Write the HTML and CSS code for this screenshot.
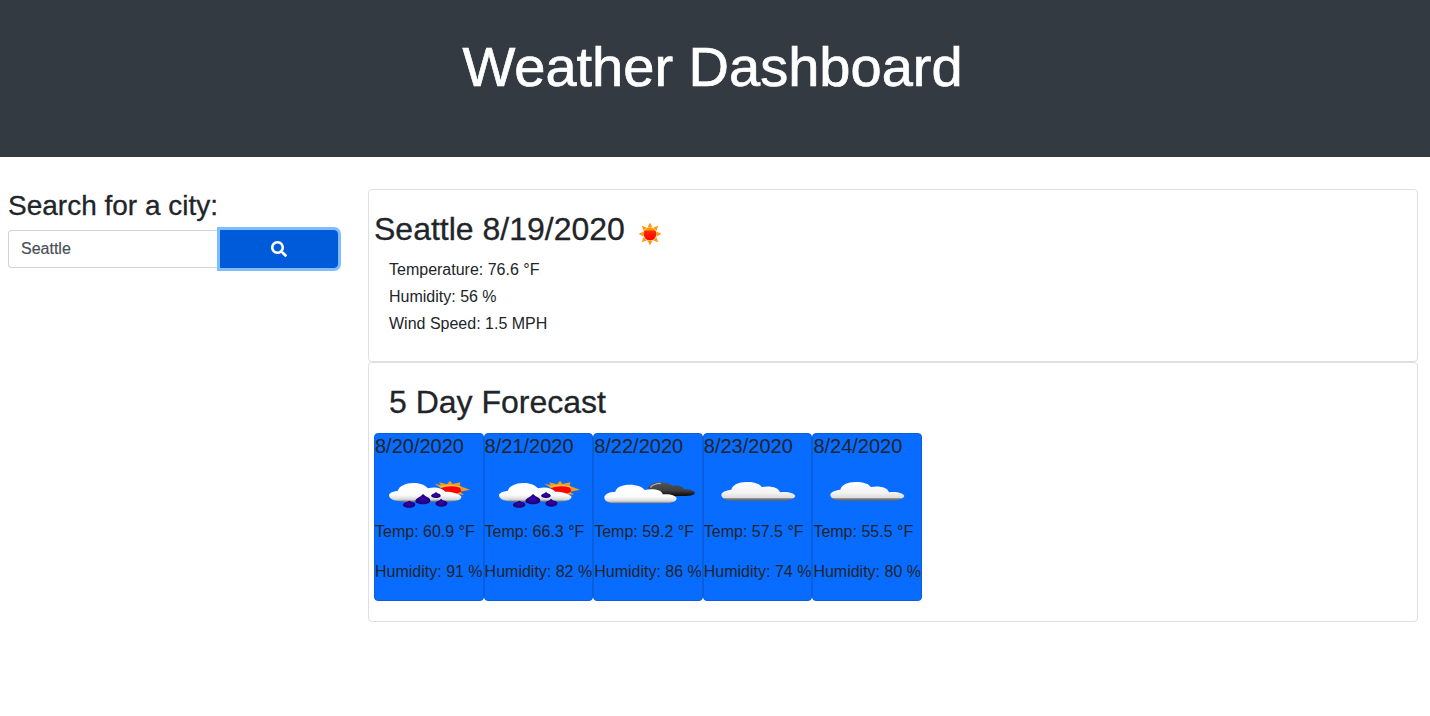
FILE: index.html
```html
<!DOCTYPE html>
<html lang="en">
<head>
<meta charset="utf-8">
<title>Weather Dashboard</title>
<link rel="stylesheet" href="styles.css">
</head>
<body>
<svg class="defs" aria-hidden="true">
  <defs>
    <linearGradient id="white" x1="0" y1="0" x2="0" y2="1">
      <stop offset="0" stop-color="#fff"/><stop offset=".65" stop-color="#fcfcfc"/><stop offset=".88" stop-color="#d8d8d8"/><stop offset="1" stop-color="#747474"/>
    </linearGradient>
    <linearGradient id="grey" x1="0" y1="0" x2="0" y2="1">
      <stop offset="0" stop-color="#fff"/><stop offset=".6" stop-color="#f2f2f2"/><stop offset=".84" stop-color="#ddd"/><stop offset=".9" stop-color="#777"/><stop offset="1" stop-color="#666"/>
    </linearGradient>
    <linearGradient id="dark" x1="0" y1="0" x2="0" y2="1">
      <stop offset="0" stop-color="#555"/><stop offset=".6" stop-color="#3f3f3f"/><stop offset="1" stop-color="#080808"/>
    </linearGradient>
    <linearGradient id="disc" x1="0" y1="0" x2="0" y2="1">
      <stop offset="0" stop-color="#ff7a00"/><stop offset=".16" stop-color="#ffa000"/><stop offset=".28" stop-color="#ff2a00"/><stop offset="1" stop-color="#f00"/>
    </linearGradient>
    <radialGradient id="drop"><stop offset="0" stop-color="#3a00b0"/><stop offset="1" stop-color="#180070"/></radialGradient>
    <g id="rays" fill="#ff9914">
      <path id="ray" d="M-2.300-7L0-11.500 2.300-7Z"/>
      <use href="#ray" transform="rotate(45)"/><use href="#ray" transform="rotate(90)"/><use href="#ray" transform="rotate(135)"/>
      <use href="#ray" transform="rotate(180)"/><use href="#ray" transform="rotate(225)"/><use href="#ray" transform="rotate(270)"/><use href="#ray" transform="rotate(315)"/>
    </g>
    <symbol id="rain" viewBox="0 0 324 162">
      <g transform="translate(17 12)">
        <path d="M161 41L180 45 175 37 199 43 208 32 216 42 239 37 237 48 268 59 239 65 250 75 227 72 200 66Z" fill="#f99b13"/>
        <path d="M176 50Q207 38 241 50L239 66 210 72Z" fill="#ffc044"/>
        <path d="M180 54Q209 44 239 53L242 65 227 71 195 68Z" fill="#f00"/>
        <path d="M25 76C25 68 38 64 52 62 55 48 77 38 101 39 119 39 134 46 142 55 165 49 185 55 194 65 214 65 235 71 242 79 244 88 231 94 207 95H66C42 95 25 87 25 76Z" fill="url(#white)"/>
        <g fill="url(#drop)">
          <path d="M86 92Q90 95 101 98C110 108 96 113 86 113 73 113 60 107 72 98Q81 95 86 92Z"/>
          <path d="M127 72Q133 79 145 84C158 98 137 103 127 103 111 103 95 96 110 85Q122 79 127 72Z"/>
          <path d="M166 66Q170 70 177 72C186 80 174 84 165 84 153 83 146 78 156 72Q162 70 166 66Z"/>
          <path d="M181 86Q185 91 196 94C207 103 194 110 183 110 169 110 158 103 169 94Q178 91 181 86Z"/>
        </g>
      </g>
    </symbol>
    <symbol id="broken" viewBox="0 0 324 162">
      <g transform="translate(-12 11)">
        <path d="M174 55C181 42 197 37 215 38 232 39 241 44 249 49 263 45 279 51 282 59 302 58 314 65 315 70 312 77 298 79 282 79H210Z" fill="url(#dark)"/>
        <path d="M181 54Q190 41 213 41" fill="none" stroke="#aaa" stroke-width="4"/>
        <path d="M43 83C44 73 57 67 76 66 80 51 98 45 119 45 142 45 158 52 164 61 187 55 217 60 218 74 243 72 259 79 260 87 257 97 242 101 220 101H78C56 101 43 95 43 83Z" fill="url(#white)"/>
      </g>
    </symbol>
    <symbol id="cloud" viewBox="0 0 324 162">
      <g transform="translate(-12 12)">
        <path d="M64 74C65 66 77 61 94 59 97 45 116 36 139 36 163 36 181 42 185 51 211 46 236 52 240 67 264 64 284 70 286 78 284 85 271 92 252 92H95C76 91 64 84 64 74Z" fill="url(#grey)"/>
      </g>
    </symbol>
  </defs>
</svg>

<header class="banner"><h1>Weather Dashboard</h1></header>

<main class="layout">
  <aside class="search">
    <h3>Search for a city:</h3>
    <form class="search-group">
      <input type="text" value="Seattle" aria-label="City">
      <button type="button" aria-label="Search">
        <svg width="16" height="16" viewBox="0 0 512 512"><path fill="currentColor" d="M505 442.700L405.300 343c-4.500-4.500-10.600-7-17-7H372c27.600-35.300 44-79.700 44-128C416 93.100 322.900 0 208 0S0 93.100 0 208s93.100 208 208 208c48.300 0 92.700-16.400 128-44v16.300c0 6.400 2.500 12.500 7 17l99.700 99.700c9.400 9.400 24.600 9.400 33.900 0l28.300-28.300c9.400-9.400 9.400-24.600.1-34zM208 336c-70.700 0-128-57.200-128-128 0-70.700 57.200-128 128-128 70.700 0 128 57.200 128 128 0 70.700-57.200 128-128 128z"/></svg>
      </button>
    </form>
  </aside>

  <div class="results">
    <section class="card current">
      <h2>Seattle 8/19/2020
        <svg class="sun" viewBox="-12 -12 24 24"><use href="#rays"/><circle r="7.100" fill="#ffbd58"/><circle r="6.300" fill="url(#disc)"/></svg>
      </h2>
      <p>Temperature: 76.6 °F</p>
      <p>Humidity: 56 %</p>
      <p>Wind Speed: 1.5 MPH</p>
    </section>
    <section class="card forecast">
      <h2>5 Day Forecast</h2>
      <div class="days">
        <article class="day"><h5>8/20/2020</h5><svg class="icon"><use href="#rain"/></svg><p>Temp: 60.9 °F</p><p>Humidity: 91 %</p></article>
        <article class="day"><h5>8/21/2020</h5><svg class="icon"><use href="#rain"/></svg><p>Temp: 66.3 °F</p><p>Humidity: 82 %</p></article>
        <article class="day"><h5>8/22/2020</h5><svg class="icon"><use href="#broken"/></svg><p>Temp: 59.2 °F</p><p>Humidity: 86 %</p></article>
        <article class="day"><h5>8/23/2020</h5><svg class="icon"><use href="#cloud"/></svg><p>Temp: 57.5 °F</p><p>Humidity: 74 %</p></article>
        <article class="day"><h5>8/24/2020</h5><svg class="icon"><use href="#cloud"/></svg><p>Temp: 55.5 °F</p><p>Humidity: 80 %</p></article>
      </div>
    </section>
  </div>
</main>
</body>
</html>
```

FILE: styles.css
```css
* { box-sizing: border-box; }
body {
  margin: 0;
  background: #fff;
  color: #212529;
  font: 16px/1.5 "Liberation Sans", Arial, sans-serif;
}
h1, h2, h3, h5, p { margin: 0; font-weight: 400; }
h1, h2, h3, h5 { line-height: 1.2; }
.defs { display: block; width: 0; height: 0; }

.banner {
  height: 157px;
  padding: 33px 5px 0 0;
  background: #343a42;
  color: #fff;
  text-align: center;
}
.banner h1 { font-size: 56px; -webkit-text-stroke: .7px #fff; }

.layout {
  display: flex;
  gap: 30px;
  padding: 32px 12px 0 8px;
}
.search { width: 330px; }
.search h3 { margin-bottom: 8px; font-size: 28px; line-height: 33px; }
.search h3, .card h2 { -webkit-text-stroke: .3px #212529; }
.search-group { display: flex; height: 38px; }
.search-group input {
  width: 212px;
  padding: 6px 12px;
  border: 1px solid #ced4da;
  border-right: 0;
  border-radius: 4px 0 0 4px;
  color: #495057;
  font: inherit;
  -webkit-text-stroke: .2px #495057;
}
.search-group button {
  display: flex;
  flex: 1;
  align-items: center;
  justify-content: center;
  padding: 0;
  border: 1px solid #005bdb;
  border-radius: 0 4px 4px 0;
  background: #005bdb;
  color: #fff;
  box-shadow: 0 0 0 3px #80bdff;
}

.results { flex: 1; }
.card { border: 1px solid #dfdfdf; border-radius: 4px; }
.card h2 { font-size: 32px; }
.current { height: 173px; padding: 20px 5px 0; }
.current h2 { display: flex; gap: 13px; align-items: center; height: 38px; margin-bottom: 8px; }
.sun { width: 24px; height: 24px; margin-top: 10px; }
.current p { height: 27px; padding-left: 15px; line-height: 28px; }
.forecast { height: 260px; padding: 20px 5px 0; }
.forecast h2 { height: 38px; margin-bottom: 12px; padding-left: 15px; }
.days { display: flex; }
.day {
  width: 109.600px;
  height: 168px;
  border: 1px solid #0760d9;
  border-radius: 4px;
  background: #076cff;
}
.day h5 { margin-bottom: 8px; font-size: 20px; }
.icon { display: block; width: 108px; height: 54px; }
.day p { margin-bottom: 16px; white-space: nowrap; }
```
